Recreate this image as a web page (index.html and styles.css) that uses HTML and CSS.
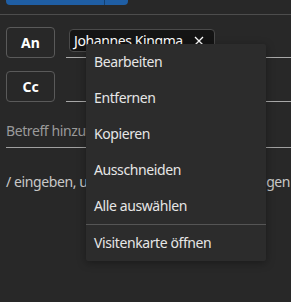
FILE: index.html
```html
<!DOCTYPE html>
<html lang="de">
<head>
<meta charset="utf-8">
<link rel="stylesheet" href="styles.css">
</head>
<body>
<div class="topbar">
  <div class="split-btn"><span class="split-main"></span><span class="split-arrow"></span></div>
</div>
<div class="compose">
  <div class="row">
    <button class="addr-btn">An</button>
    <div class="field">
      <span class="chip">Johannes Kingma
        <svg class="chip-x" width="10" height="10" viewBox="0 0 10 10"><path d="M1 1 L9 9 M9 1 L1 9" stroke="#fff" stroke-width="1.3" fill="none"/></svg>
      </span>
    </div>
  </div>
  <div class="row">
    <button class="addr-btn">Cc</button>
    <div class="field"></div>
  </div>
  <div class="subject">Betreff hinzufügen</div>
  <div class="body-hint">/ eingeben, um Dateien und mehr einzufügen</div>
</div>
<div class="menu">
  <div class="menu-item">Bearbeiten</div>
  <div class="menu-item">Entfernen</div>
  <div class="menu-item">Kopieren</div>
  <div class="menu-item">Ausschneiden</div>
  <div class="menu-item">Alle auswählen</div>
  <div class="menu-sep"></div>
  <div class="menu-item">Visitenkarte öffnen</div>
</div>
</body>
</html>
```
FILE: styles.css
```css
html, body {
  margin: 0;
  padding: 0;
  background: #282828;
  font-family: "Noto Sans", "Open Sans", sans-serif;
  font-size: 14px;
  letter-spacing: -0.4px;
  color: #e6e6e6;
  width: 291px;
  height: 302px;
  overflow: hidden;
}
.topbar {
  height: 14px;
  border-bottom: 1px solid #4d4d4d;
  padding: 0 6px;
}
.split-btn {
  display: flex;
  width: 122px;
  height: 5px;
  border-radius: 0 0 4px 4px;
  overflow: hidden;
  background: #1f5ea4;
}
.split-main {
  width: 98px;
  border-right: 1px solid #14406f;
}
.split-arrow { flex: 1; }
.compose {
  padding: 12px 0 0 6px;
}
.row {
  display: flex;
  align-items: stretch;
  height: 31px;
  margin-bottom: 13px;
}
.addr-btn {
  width: 49px;
  height: 31px;
  box-sizing: border-box;
  border: 1px solid #5a5a5a;
  border-radius: 4px;
  background: #282828;
  color: #fff;
  font-family: inherit;
  font-size: 14px;
  font-weight: 700;
  letter-spacing: 0;
  padding: 0;
  margin-right: 11px;
}
.field {
  flex: 1;
  border-bottom: 1px solid #a8a8a8;
  padding: 2px 0 0 3px;
}
.chip {
  display: inline-flex;
  align-items: center;
  height: 23px;
  box-sizing: border-box;
  padding: 0 10px 0 4px;
  background: #141414;
  border: 1px solid #4a4a4a;
  border-radius: 4px;
  color: #fff;
  font-size: 14px;
}
.chip-x { margin-left: 11px; }
.subject {
  margin-top: 7px;
  height: 32px;
  line-height: 32px;
  border-bottom: 1px solid #a0a0a0;
  color: #9a9a9a;
}
.body-hint {
  margin-top: 24px;
  color: #c8c8c8;
  white-space: nowrap;
}
.menu {
  position: absolute;
  left: 86px;
  top: 44px;
  width: 180px;
  background: #2c2c2c;
  box-shadow: 0 2px 8px rgba(0,0,0,0.35);
  border-radius: 2px;
}
.menu-item {
  height: 36px;
  line-height: 36px;
  padding-left: 8px;
  color: #e6e6e6;
}
.menu-sep {
  height: 1px;
  background: #555;
}
```
